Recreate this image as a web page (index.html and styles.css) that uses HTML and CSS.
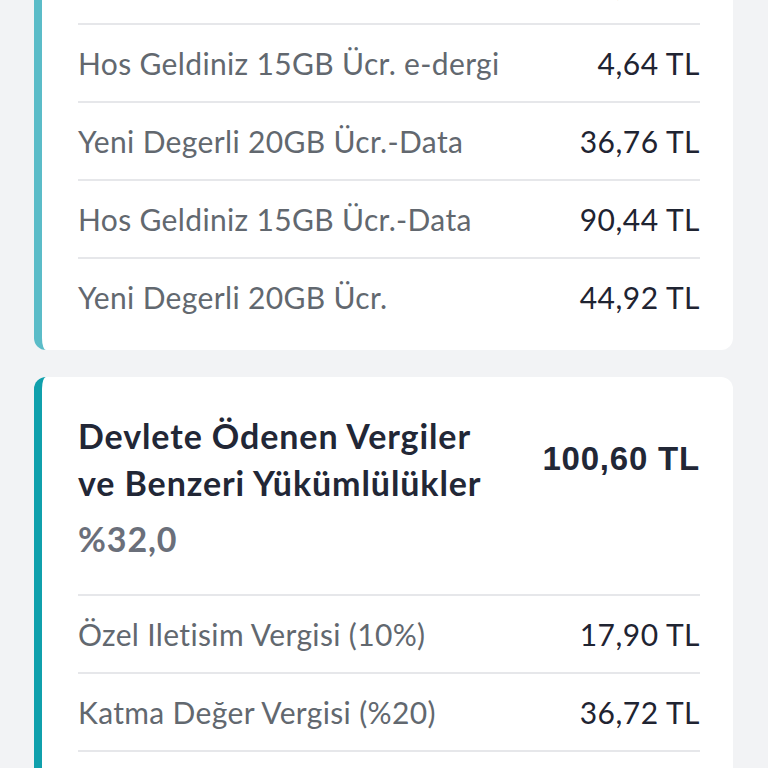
FILE: index.html
```html
<!DOCTYPE html>
<html lang="tr">
<head>
    <meta charset="UTF-8">
    <meta name="viewport" content="width=device-width, initial-scale=1.0">
    <title>Fatura Detayı</title>
    <link rel="stylesheet" href="styles.css">
</head>
<body>
    <div class="page">
        <!-- paket ücretleri -->
        <div class="card card-light card-cut">
            <div class="row">
                <span class="label">Hos Geldiniz 15GB Ücr.</span>
                <span class="value">3,19 TL</span>
            </div>
            <div class="row">
                <span class="label">Hos Geldiniz 15GB Ücr. e-dergi</span>
                <span class="value">4,64 TL</span>
            </div>
            <div class="row">
                <span class="label">Yeni Degerli 20GB Ücr.-Data</span>
                <span class="value">36,76 TL</span>
            </div>
            <div class="row">
                <span class="label">Hos Geldiniz 15GB Ücr.-Data</span>
                <span class="value">90,44 TL</span>
            </div>
            <div class="row">
                <span class="label">Yeni Degerli 20GB Ücr.</span>
                <span class="value">44,92 TL</span>
            </div>
        </div>

        <!-- vergiler -->
        <div class="card card-dark">
            <div class="card-head">
                <div class="head-top">
                    <h3 class="title">Devlete Ödenen Vergiler<br>ve Benzeri Yükümlülükler</h3>
                    <span class="total">100,60 TL</span>
                </div>
                <div class="ratio">%32,0</div>
            </div>
            <div class="row">
                <span class="label">Özel Iletisim Vergisi (10%)</span>
                <span class="value">17,90 TL</span>
            </div>
            <div class="row">
                <span class="label">Katma Değer Vergisi (%20)</span>
                <span class="value">36,72 TL</span>
            </div>
            <div class="row">
                <span class="label">Kültür Bakanlığı Payı</span>
                <span class="value">1,79 TL</span>
            </div>
        </div>
    </div>
</body>
</html>
```

FILE: styles.css
```css
body {
    margin: 0;
    background-color: #f2f3f5;
    font-family: Lato, "Noto Sans", sans-serif;
    overflow: hidden;
}

.page {
    width: 699px;
    margin-left: 34px;
    margin-top: -55px;
}

.card {
    background: #ffffff;
    border-radius: 12px;
    border-left: 8px solid #5bbcc8;
    padding: 0 33px 15px 36px;
    margin-bottom: 27px;
}

.card-cut {
    border-top-left-radius: 0;
    border-top-right-radius: 0;
}

.card-dark {
    border-left-color: #10a0ac;
    padding-top: 35px;
}

.row {
    display: flex;
    justify-content: space-between;
    align-items: center;
    height: 76px;
    border-top: 2px solid #e6e7ea;
}

.card-cut .row:first-child {
    border-top: none;
    height: 78px;
}

.label {
    font-size: 30px;
    letter-spacing: 0.35px;
    color: #62686f;
}

.value {
    font-size: 30px;
    letter-spacing: 0.5px;
    color: #1f2432;
}

.card-head {
    padding-bottom: 32px;
}

.head-top {
    display: flex;
    justify-content: space-between;
    align-items: center;
}

.title {
    margin: 0;
    font-size: 34px;
    line-height: 47px;
    letter-spacing: 0.9px;
    font-weight: 700;
    color: #222736;
}

.total {
    font-family: "Liberation Sans", Arial, sans-serif;
    font-size: 33px;
    letter-spacing: 0.8px;
    font-weight: 700;
    color: #222736;
}

.ratio {
    font-size: 34px;
    line-height: 47px;
    letter-spacing: 0.9px;
    font-weight: 700;
    color: #6a6f7a;
    margin-top: 9px;
}
```
